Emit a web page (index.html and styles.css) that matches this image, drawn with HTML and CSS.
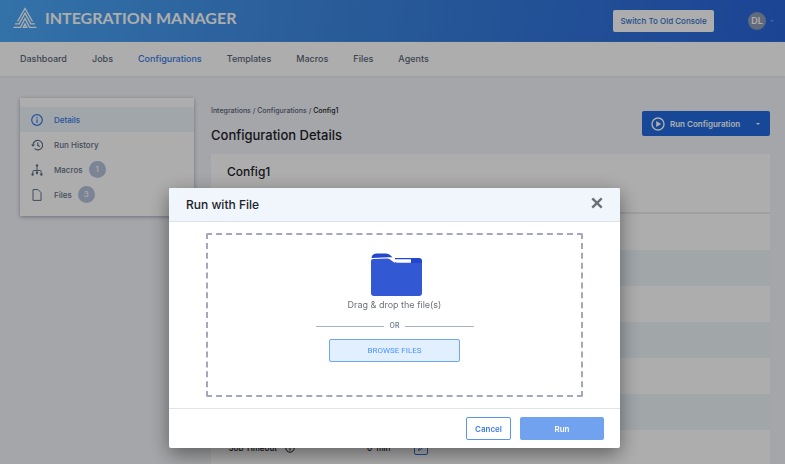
FILE: index.html
```html
<!DOCTYPE html>
<html lang="en">
<head>
<meta charset="utf-8">
<meta name="viewport" content="width=device-width, initial-scale=1">
<title>Integration Manager</title>
<link rel="stylesheet" href="styles.css">
</head>
<body>
<header class="topbar">
  <a class="brand" href="#">
    <svg class="brand-mark" viewBox="0 0 24 22" fill="none" stroke="currentColor" stroke-width="1.3">
      <path d="M4.500 14.500L12 1.500L19.500 14.500"/>
      <path d="M2 16.800H6.200L12 6.200L17.800 16.800H22"/>
      <path d="M.5 20.300H7.500L12 11.500L16.500 20.300H23.500"/>
      <path d="M10.300 20.300L12 17L13.700 20.300Z"/>
    </svg>
    <span>INTEGRATION MANAGER</span>
  </a>
  <div class="account">
    <button class="switch" type="button">Switch To Old Console</button>
    <button class="user" type="button"><span class="avatar">DL</span><span class="caret"></span></button>
  </div>
</header>
<nav class="tabs">
  <a href="#">Dashboard</a>
  <a href="#">Jobs</a>
  <a class="active" href="#">Configurations</a>
  <a href="#">Templates</a>
  <a href="#">Macros</a>
  <a href="#">Files</a>
  <a href="#">Agents</a>
</nav>
<main class="page">
  <aside class="side">
    <a class="active" href="#">
      <svg viewBox="0 0 12 12" fill="none" stroke="currentColor" stroke-width="1.2"><circle cx="6" cy="6" r="5.300"/><path d="M6 5.200V9M6 3V4.300"/></svg>
      Details
    </a>
    <a href="#">
      <svg viewBox="0 0 12 12" fill="none" stroke="currentColor" stroke-width="1.200"><path d="M2 6A4.800 4.800 0 1 1 3.500 9.600M6.800 3.500V6.300L8.800 7.500"/><path d="M0 5.500H4L2 7.800Z" fill="currentColor" stroke="none"/></svg>
      Run History
    </a>
    <a href="#">
      <svg viewBox="0 0 12 12" fill="none" stroke="currentColor"><path d="M6 2V9M1.800 10V7.500Q1.800 6.500 3 6.500H9Q10.200 6.500 10.200 7.500V10"/><g fill="currentColor" stroke="none"><circle cx="6" cy="1.400" r="1.200"/><circle cx="1.600" cy="10.500" r="1.200"/><circle cx="6" cy="9" r="1.200"/><circle cx="10.400" cy="10.500" r="1.200"/></g></svg>
      Macros <span class="badge">1</span>
    </a>
    <a href="#">
      <svg viewBox="0 0 12 12" fill="none" stroke="currentColor"><path d="M2 .6H7L10 3.600V11.400H2Z"/></svg>
      Files <span class="badge">3</span>
    </a>
  </aside>
  <section class="content">
    <div class="heading">
      <div>
        <div class="crumbs"><a href="#">Integrations</a> / <a href="#">Configurations</a> / <span>Config1</span></div>
        <h1>Configuration Details</h1>
      </div>
      <div class="split">
        <button class="run-config" type="button">
          <svg viewBox="0 0 14 14" fill="none" stroke="currentColor" stroke-width="1.400"><circle cx="7" cy="7" r="6"/><path d="M5.200 3.900L10.200 7L5.200 10.100Z" fill="currentColor" stroke="none"/></svg>
          Run Configuration
        </button>
        <button class="more" type="button" aria-label="More run options"><span class="caret"></span></button>
      </div>
    </div>
    <div class="card">
      <h2>Config1</h2>
      <table>
        <tbody>
          <tr><th></th><td></td></tr>
          <tr><th></th><td></td></tr>
          <tr><th></th><td></td></tr>
          <tr><th></th><td></td></tr>
          <tr><th></th><td></td></tr>
          <tr><th></th><td></td></tr>
          <tr>
            <th scope="row"><span class="cell">Job Timeout <svg class="info" viewBox="0 0 10 10" fill="none" stroke="currentColor"><circle cx="5" cy="5" r="4.200"/><path d="M5 4.500V7.500M5 2.500V3.500"/></svg></span></th>
            <td><span class="cell"><span>0 &nbsp;min</span><button class="edit" type="button" aria-label="Edit job timeout"><svg viewBox="0 0 8 8" fill="none" stroke="currentColor"><path d="M1.500 6.500L2 4.800L5.500 1.300L6.700 2.500L3.200 6Z"/></svg></button></span></td>
          </tr>
        </tbody>
      </table>
    </div>
  </section>
</main>
<div class="overlay">
  <div class="modal" role="dialog" aria-modal="true" aria-labelledby="dialog-title">
    <div class="modal-head">
      <h2 id="dialog-title">Run with File</h2>
      <button class="close" type="button" aria-label="Close"><svg viewBox="0 0 12 12" stroke="currentColor" stroke-width="2.400" fill="none"><path d="M1.300 1.300L10.700 10.700M10.700 1.300L1.300 10.700"/></svg></button>
    </div>
    <div class="modal-body">
      <div class="drop">
        <svg class="folder" viewBox="-4 0 55 43">
          <path fill="#2446cf" d="M.5 4.500Q1.500 .5 5 .5H15Q17.500 .5 19 2L21.500 4.200H17L.5 5Z"/>
          <path fill="#2446cf" d="M24 5H48Q51 5 51 8V14H24Z"/>
          <path fill="#3358d4" d="M0 8Q0 6.200 2 6.100L16 5.500Q18.500 5.500 20.500 7.500Q23 10 26 10H51V40Q51 43 48 43H3Q0 43 0 40Z"/>
          <path fill="#fff" d="M22 6.300H40V9.800H26Q24.500 9.800 23 8Z"/>
        </svg>
        <p>Drag &amp; drop the file(s)</p>
        <div class="or">OR</div>
        <button class="browse" type="button">BROWSE FILES</button>
      </div>
    </div>
    <div class="modal-foot">
      <button class="cancel" type="button">Cancel</button>
      <button class="run" type="button">Run</button>
    </div>
  </div>
</div>
</body>
</html>
```
FILE: styles.css
```css
* { box-sizing: border-box; }
body {
  margin: 0;
  height: 100vh;
  overflow: hidden;
  background: #f3f5f9;
  color: #1c222b;
  font: 500 8px/12px Inter, sans-serif;
}
a { color: inherit; text-decoration: none; }
button { font: inherit; padding: 0; border: 0; border-radius: 2px; cursor: pointer; }
h1, h2, p { margin: 0; }
svg { display: block; flex: none; }

.topbar {
  display: flex;
  align-items: center;
  justify-content: space-between;
  height: 42px;
  padding: 0 11px 0 13px;
  color: #fff;
  background: linear-gradient(100deg, #4ca9f8, #3c85e0 45%, #2965da);
}
.brand { display: flex; align-items: center; gap: 8px; font: 700 16px/20px Lato, sans-serif; margin-bottom: 6px; }
.brand-mark { width: 24px; height: 22px; }
.account { display: flex; align-items: center; gap: 34px; }
.switch { width: 101px; height: 22px; background: #fff; color: #3270cf; }
.user { display: flex; align-items: center; gap: 4px; background: none; color: #4ca0f0; }
.avatar { width: 18px; height: 18px; border-radius: 50%; background: #8f9cb5; color: #fff; font-size: 9px; font-weight: 600; line-height: 18px; }
.caret { border: 2px solid transparent; border-top-color: currentColor; border-bottom: 0; }

.tabs {
  display: flex;
  gap: 25px;
  padding: 0 20px;
  background: #fff;
  color: #5a6679;
  font-size: 9px;
  line-height: 34px;
  box-shadow: 0 1px 2px #e4e7ec;
}
.tabs .active { color: #357be8; }

.page { display: flex; align-items: flex-start; gap: 17px; padding: 22px 15px 0 20px; }
.side { flex: none; width: 174px; padding: 9px 0; background: #fff; color: #647089; box-shadow: 0 1px 4px #a2a8b4; }
.side a { display: flex; align-items: center; height: 25px; padding-left: 11px; }
.side svg { width: 12px; height: 12px; margin-right: 11px; }
.side .active { background: #edf5fb; color: #357be8; }
.badge { width: 17px; height: 17px; margin-left: 6px; border-radius: 50%; background: #b5c3da; color: #fff; line-height: 17px; text-align: center; }

.content { flex: 1; min-width: 0; padding-top: 7px; }
.heading { display: flex; justify-content: space-between; align-items: flex-start; height: 49px; }
.crumbs { font-size: 7px; color: #59647b; white-space: pre; }
.crumbs span { color: #1c222b; }
h1 { margin-top: 8px; font-size: 13px; font-weight: 500; line-height: 20px; }
.split { display: flex; margin-top: 6px; }
.split button { height: 25px; background: #226be0; color: #fff; }
.split .run-config { display: flex; align-items: center; gap: 5px; width: 104px; padding-left: 9px; border-radius: 2px 0 0 2px; font-weight: 600; white-space: nowrap; }
.run-config svg { width: 14px; height: 14px; }
.split .more { display: flex; align-items: center; justify-content: center; width: 24px; border-radius: 0 2px 2px 0; }
.card { background: #fff; }
.card h2 { height: 60px; padding-left: 16px; border-bottom: 2px solid #e9ebee; font-size: 12px; font-weight: 500; line-height: 36px; }
table { width: 100%; border-collapse: collapse; table-layout: fixed; }
tr { height: 36px; }
tr:nth-child(even) { background: #eef5fa; }
th { width: 156px; padding: 0 0 0 18px; font-weight: 500; text-align: left; }
td { padding: 0; }
.cell { display: flex; align-items: center; gap: 8px; }
.info { width: 10px; height: 10px; }
.edit { display: grid; place-items: center; width: 14px; height: 14px; margin-left: 16px; border: 1px solid #2e71dc; background: none; color: #2e71dc; }
.edit svg { width: 8px; height: 8px; }

.overlay {
  position: fixed;
  inset: 0;
  display: flex;
  justify-content: center;
  align-items: flex-end;
  padding: 0 0 16px 4px;
  background: rgba(0, 0, 0, .32);
}
.modal { width: 451px; background: #fff; border-radius: 2px; box-shadow: 0 6px 20px rgba(0, 0, 0, .45); }
.modal-head { display: flex; align-items: center; justify-content: space-between; height: 34px; padding: 0 17px; background: #f0f6fb; border-bottom: 1px solid #d8e3ec; border-radius: 2px 2px 0 0; }
.modal-head h2 { font-size: 12px; font-weight: 500; line-height: 18px; }
.close { padding-bottom: 3px; background: none; color: #6b6f76; }
.close svg { width: 12px; height: 12px; }
.modal-body { padding: 11px 37px; }
.drop { display: flex; flex-direction: column; align-items: center; padding: 18px 0 33px; border: 2px dashed #a3a8bf; border-radius: 2px; }
.folder { width: 55px; height: 43px; }
.drop p { color: #6d7178; font: 400 9px/18px Inter, sans-serif; }
.or { display: flex; align-items: center; gap: 6px; width: 158px; margin: 6px 0 7px; color: #66758c; font-size: 7px; }
.or::before, .or::after { content: ""; flex: 1; border-top: 1px solid #a5b4c6; }
.browse { width: 131px; height: 23px; border: 1px solid #6ca6f4; background: #e2efff; color: #4795ff; font: 400 8px/12px Roboto, sans-serif; }
.modal-foot { display: flex; justify-content: flex-end; gap: 9px; padding: 8px 16px; border-top: 1px solid #dfe5ec; font-weight: 600; }
.cancel { width: 45px; height: 23px; border: 1px solid #5b94ee; background: #fff; color: #3d7de6; }
.run { width: 84px; height: 23px; background: #70a2f0; color: #fff; }
```
